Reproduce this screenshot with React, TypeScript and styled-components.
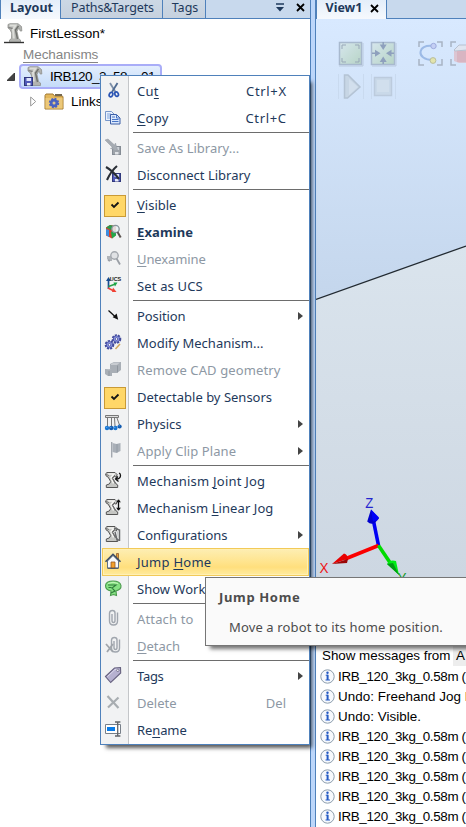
import React from "react";
import styled, { createGlobalStyle, css } from "styled-components";

const Global = createGlobalStyle`
  * { box-sizing: border-box; }
  html, body { margin: 0; padding: 0; overflow: hidden; }
  body { background: #fff; }
  svg { display: block; flex: none; }
`;

const uiFont = `"Noto Sans", "Open Sans", sans-serif`;
const plainFont = `"Liberation Sans", Arial, sans-serif`;

const Window = styled.div`
  position: relative;
  display: flex;
  width: 466px;
  height: 827px;
  overflow: hidden;
  background: #fff;
  font-family: ${uiFont};
`;

const SidePanel = styled.aside`
  width: 310px;
  flex: none;
  display: flex;
  flex-direction: column;
`;

const Splitter = styled.div`
  width: 6px;
  flex: none;
  background: #bcd6fa;
  border-left: 1px solid #4f81bb;
  border-right: 1px solid #4f81bb;
`;

const MainPanel = styled.main`
  flex: 1;
  min-width: 0;
  display: flex;
  flex-direction: column;
`;

const TabBar = styled.div`
  height: 19px;
  flex: none;
  display: flex;
  background: #c8d9ed;
  border-bottom: 1px solid #4f81bb;
`;

const Tab = styled.div<{ $w: number; $active?: boolean; $spacing?: number }>`
  width: ${(p) => p.$w}px;
  height: ${(p) => (p.$active ? 19 : 18)}px;
  flex: none;
  display: flex;
  align-items: center;
  justify-content: center;
  gap: 8px;
  padding: 0 0 3px 2px;
  border-right: 1px solid #4f81bb;
  background: ${(p) => (p.$active ? "linear-gradient(#e4eefa, #f6f9fd)" : "linear-gradient(#ccd8e5, #c6d1de)")};
  color: #1e395b;
  font-size: 12.5px;
  line-height: 16px;
  white-space: nowrap;
  letter-spacing: ${(p) => p.$spacing ?? 0}px;
  font-weight: ${(p) => (p.$active ? 700 : 400)};
`;

const TabLead = styled.div`
  width: 1px;
  height: 18px;
  flex: none;
  background: #4f81bb;
`;

const TabTools = styled.div`
  margin-left: auto;
  display: flex;
  align-items: center;
  gap: 12px;
  padding: 0 5px 3px 0;
`;

const Tree = styled.div`
  display: flex;
  flex-direction: column;
  padding-top: 2px;
  font-family: ${plainFont};
  font-size: 13.5px;
  color: #000;
`;

const TreeRow = styled.div<{ $h: number; $indent: number; $gap?: number }>`
  height: ${(p) => p.$h}px;
  padding-left: ${(p) => p.$indent}px;
  display: flex;
  align-items: center;
  gap: ${(p) => p.$gap ?? 0}px;
  white-space: nowrap;
`;

const GroupLabel = styled.span`
  color: #858585;
  line-height: 15px;
  height: 16px;
  letter-spacing: -0.05px;
  border-bottom: 1px solid #858585;
`;

const SelectedNode = styled.div`
  width: 143px;
  height: 25px;
  display: flex;
  align-items: center;
  gap: 6px;
  padding-left: 3px;
  letter-spacing: -0.5px;
  border: 2px solid #a9adf8;
  border-radius: 4px;
  background: linear-gradient(#e3eefd, #c5dcf9);
`;

const Viewport = styled.div`
  height: 626px;
  flex: none;
`;

const Output = styled.section`
  flex: 1;
  display: flex;
  flex-direction: column;
  font-family: ${plainFont};
  font-size: 13.4px;
  color: #000;
  white-space: nowrap;
  overflow: hidden;
`;

const Filter = styled.div`
  height: 21px;
  flex: none;
  display: flex;
  align-items: center;
  padding-left: 6px;
`;

const FilterLabel = styled.span`
  width: 131px;
  flex: none;
  letter-spacing: -0.02px;
`;

const FilterValue = styled.span`
  flex: 1;
  height: 21px;
  padding: 3px 0 0 3px;
  background: #ededed;
`;

const Message = styled.div`
  height: 20px;
  flex: none;
  display: flex;
  align-items: center;
  gap: 3px;
  padding-left: 4px;
`;

const MessageText = styled.span<{ $spacing: number }>`
  letter-spacing: ${(p) => p.$spacing}px;
`;

const Menu = styled.div`
  position: absolute;
  left: 100px;
  top: 75px;
  width: 210px;
  height: 670px;
  padding: 2px 0 0 0;
  border: 1px solid #4f81bb;
  background: linear-gradient(90deg, #f1f2f3 27px, #c4c6c9 27px, #c4c6c9 28px, #fff 28px);
  box-shadow: 4px 5px 4px -2px rgba(0, 0, 0, 0.65);
`;

const Item = styled.div<{ $hot?: boolean; $off?: boolean }>`
  position: relative;
  height: 27px;
  display: flex;
  align-items: center;
  font-size: 13px;
  line-height: 20px;
  white-space: nowrap;
  color: ${(p) => (p.$off ? "#8d98a4" : "#1e395b")};
  ${(p) =>
    p.$hot &&
    css`
      &::before {
        content: "";
        position: absolute;
        inset: -1px 0 0 1px;
        border: 1px solid #f2ca58;
        box-shadow: inset 0 0 0 1px #fff0b5;
        background: linear-gradient(#fdeeb3, #ffe48d 50%, #ffdf7d 70%, #ffeb9f);
      }
    `}
`;

const Glyph = styled.div`
  position: relative;
  width: 36px;
  flex: none;
`;

const Label = styled.span<{ $bold?: boolean; $spacing: number }>`
  position: relative;
  padding-bottom: 2px;
  font-weight: ${(p) => (p.$bold ? 700 : 400)};
  letter-spacing: ${(p) => p.$spacing}px;
  u { text-underline-offset: 2px; text-decoration-thickness: 1px; text-decoration-skip-ink: none; }
`;

const Shortcut = styled.span<{ $spacing: number }>`
  margin-left: auto;
  padding: 0 ${(p) => 23 - p.$spacing}px 2px 0;
  letter-spacing: ${(p) => p.$spacing}px;
`;

const SubArrow = styled.span`
  margin: 0 6px 1px auto;
  border: 4px solid transparent;
  border-left: 5px solid #444;
  border-right: 0;
`;

const Rule = styled.div`
  height: 3px;
  margin-left: 32px;
  border-top: 1px solid #6d6d6d;
`;

const Tooltip = styled.div`
  position: absolute;
  left: 205px;
  top: 577px;
  width: 280px;
  height: 69px;
  padding: 9px 0 0 13px;
  border: 1px solid #767676;
  background: #fafafa;
  color: #4c4c4c;
  font-size: 13px;
  line-height: 20px;
  white-space: nowrap;
  box-shadow: 4px 4px 4px -1px rgba(0, 0, 0, 0.55);
`;

const TipTitle = styled.div`
  font-weight: 700;
  letter-spacing: 0.65px;
`;

const TipBody = styled.div`
  padding: 10px 0 0 10px;
  letter-spacing: 0.13px;
`;

/* Robot arm silhouette shared by several icons, drawn on a 18x18 grid. */
const ArmShape = () => (
  <>
    <path d="M4 1.5h8l2.200 2.200-1 2.400-2-.6-1.600 1.700 3.400 5.600 1.700 1.200v2.500H3.300v-2.500l3-1 1.400-2.400-2.500-4.400L3 4.800 2.600 2.800z" fill="#c5c6c3" stroke="#555" strokeWidth="1" />
    <path d="M5 3h6l-3 3.500 2.500 6" fill="none" stroke="#f5f5f2" strokeWidth="1.500" />
    <path d="M12 4l-3 3 3.500 6M3 3.500l3 1" fill="none" stroke="#777" />
  </>
);

const Floppy = ({ x, y, gray }: { x: number; y: number; gray?: boolean }) => (
  <g transform={`translate(${x} ${y})`}>
    <rect x=".5" y=".5" width="8" height="8" fill={gray ? "#9da3aa" : "#5059b8"} stroke={gray ? "#858c95" : "#30387c"} />
    <rect x="2.500" y="1" width="4.500" height="3" fill={gray ? "#cbd0d6" : "#dfe5fb"} />
    <rect x="3" y="6" width="3.500" height="2.500" fill={gray ? "#dfe2e6" : "#e9ecf7"} />
  </g>
);

const RobotIcon = ({ base, save }: { base?: boolean; save?: boolean }) => (
  <svg width="20" height="21" viewBox="0 0 20 21">
    <path d="M4 1.500L6 .7h8l3.500 2.800.3 4.500h-1.600l-.8-2.500-1.400.5-1 2.500 1.500 7 2 1.500v2.500H5.500V17L7.500 15.500 7.700 10 6 6.500 4 5z" fill="#b2b3b0" stroke="#8f908d" strokeWidth=".8" />
    <path d="M5.500 2.500h6l-2.500 4 .8 9" fill="none" stroke="#dcddd9" strokeWidth="2" />
    <path d="M14.500 3l-3 4 2 9" fill="none" stroke="#6f716d" strokeWidth="1.400" />
    <path d="M4.500 4.500l4 1" stroke="#777" />
    {base && <path d="M0 19.500h20" stroke="#333" strokeWidth="1.400" />}
    {save && <Floppy x={0} y={11} />}
  </svg>
);

const Box = ({ children }: { children: React.ReactNode }) => (
  <svg width="27" height="27" viewBox="0 0 27 27">{children}</svg>
);

const Gear = ({ cx, cy, r }: { cx: number; cy: number; r: number }) => (
  <g>
    <circle cx={cx} cy={cy} r={r + 0.3} fill="none" stroke="#414a9c" strokeWidth="2.600" strokeDasharray="1.900 1" />
    <circle cx={cx} cy={cy} r={r} fill="#8e98e3" stroke="#414a9c" strokeWidth=".8" />
    <circle cx={cx} cy={cy} r="1.300" fill="#fff" stroke="#414a9c" strokeWidth=".8" />
  </g>
);

const Clip = ({ x }: { x: number }) => (
  <path transform={`translate(${x} 0)`} d="M3.500 8v6.500q0 2 1.500 2t1.500-2V7q0-2.500-2.600-2.500T1 7v8q0 4 4 4t4-4V6.500" fill="none" stroke="#a0a6ae" strokeWidth="1.400" />
);

const icons: Record<string, React.ReactNode> = {
  cut: (
    <>
      <path d="M9 5l5.500 9" stroke="#7d8fa8" strokeWidth="1.800" />
      <path d="M16.500 5L11 14" stroke="#506b92" strokeWidth="1.800" />
      <ellipse cx="10" cy="16.600" rx="1.700" ry="2.300" fill="none" stroke="#2b55b4" strokeWidth="1.700" transform="rotate(25 10 16.600)" />
      <ellipse cx="15.600" cy="16.200" rx="1.700" ry="2.300" fill="none" stroke="#2b55b4" strokeWidth="1.700" transform="rotate(-25 15.600 16.200)" />
    </>
  ),
  copy: (
    <>
      <path d="M4.500 6.500h6l3 3v6h-9z" fill="#eaf1fc" stroke="#7797ca" />
      <path d="M6 9h4M6 11h4M6 13h4" stroke="#7fa5df" />
      <path d="M9.500 9.500h6l3.500 3.500v6H9.500z" fill="#dce9fd" stroke="#3d5fa6" />
      <path d="M15.500 9.500V13H19M11 12h3M11 14.500h6.500M11 16.500h6.500" stroke="#4875c5" fill="none" />
    </>
  ),
  save: (
    <>
      <Floppy x={11} y={11} gray />
      <path d="M4 5l3-1 6.500 6 1-2 2 7-7-1.500 2-1z" fill="#a5abb2" stroke="#949aa2" strokeWidth=".5" />
    </>
  ),
  disconnect: (
    <>
      <Floppy x={11} y={11} />
      <path d="M5 5q7 4 13 12M16 4Q10 9 6 18" fill="none" stroke="#292e35" strokeWidth="2.100" />
    </>
  ),
  check: (
    <>
      <rect x="3.500" y="3.500" width="21" height="21" fill="#ffd768" stroke="#c99a36" />
      <path d="M10.500 12.500l2.500 2.500L17.500 10.500" fill="none" stroke="#151515" strokeWidth="1.800" />
    </>
  ),
  examine: (
    <>
      <path d="M5 8.500l4-2.500 6 1v9l-4 3.500-6-3z" fill="#d5442f" />
      <path d="M5 8.500l4-2.500 4 1-3 4z" fill="#2a9a4b" />
      <path d="M5 10v6l3 2v-7z" fill="#3c8de0" />
      <path d="M10 13l5-2v5.500l-4 3z" fill="#24a84b" />
      <circle cx="14.500" cy="10" r="3.700" fill="#e9f2f5" fillOpacity=".85" stroke="#87949c" strokeWidth="1.300" />
      <path d="M16.500 13l3.200 5.500" stroke="#5b5350" strokeWidth="2" />
    </>
  ),
  unexamine: (
    <>
      <path d="M6 10h5v5H8l-2-2z" fill="#b0b4b9" />
      <circle cx="13.500" cy="9.500" r="3.700" fill="#e0e2e5" stroke="#a3a8ae" strokeWidth="1.400" />
      <path d="M15.500 12.500l3.500 6M7 14l2 1" stroke="#9a9fa6" strokeWidth="1.800" />
    </>
  ),
  ucs: (
    <>
      <path d="M7.500 16V6" stroke="#174b91" strokeWidth="1.700" />
      <path d="M5 8l2.500-4L10 8z" fill="#164b93" />
      <path d="M7.500 13.500l7-2.500" stroke="#2ba248" strokeWidth="1.600" />
      <path d="M12.500 9.500h4l-2.500 4z" fill="#18a644" />
      <path d="M7 15l5 2.500" stroke="#ef4238" strokeWidth="1.700" />
      <path d="M11 19l1-4.500 3.500 4.500z" fill="#f04134" />
      <text x="8.800" y="8" fontSize="5.500" fontWeight="700" fontFamily="Liberation Sans" fill="#222" textLength="11.400">UCS</text>
    </>
  ),
  position: (
    <>
      <path d="M7.500 7.500l7 6.500" stroke="#111" strokeWidth="1.300" />
      <path d="M17.200 16.700l-5.500-2.400 3.900-3.900z" fill="#111" />
    </>
  ),
  gears: (
    <>
      <Gear cx={15.500} cy={9} r={3.200} />
      <Gear cx={8.500} cy={14.800} r={3.200} />
      <path d="M14.500 19l4.500-5" stroke="#d2a85a" strokeWidth="1.500" />
    </>
  ),
  geometry: (
    <>
      <path d="M4 12h7v7H7l-3-2zM9 7l4-2h7v8l-4 3H9z" fill="#a9afb6" />
      <path d="M10 7l3-1.500h6L16 8h-6zM4.500 12l3 1H11" fill="#c8ccd1" />
      <path d="M16.500 8.500v7M8 14v5" stroke="#8f969e" />
    </>
  ),
  physics: (
    <>
      <path d="M4.500 4.500h13v2h-13z" fill="#dedede" stroke="#777" />
      <path d="M6.500 7v8M10.500 7v8M13.500 7l.5 8M16 7l2.500 7" stroke="#777" fill="none" />
      <circle cx="6" cy="17" r="2.200" fill="#1774d0" />
      <circle cx="10.200" cy="17" r="2.200" fill="#125bb0" />
      <circle cx="14.400" cy="17" r="2.200" fill="#1774d0" />
      <circle cx="18.600" cy="15.500" r="2.100" fill="#125bb0" />
      <path d="M5.300 16.300h1m3 0h1m3 0h1m3.300-1.500h1" stroke="#75bdff" />
    </>
  ),
  clipPlane: (
    <>
      <path d="M10.700 4v15.500" stroke="#a3a8af" strokeWidth="1.400" />
      <path d="M11.500 5l4 1 4-1v8l-4 2-4-1z" fill="#a9afb7" />
      <path d="M16 6v8.500" stroke="#929ba4" />
    </>
  ),
  joint: (
    <>
      <g transform="translate(2 3)"><ArmShape /></g>
      <path d="M15 11q4.500 0 4.500-3.500 0-2-1.500-2.500M17 8.500L14.500 11l3 2.500" fill="none" stroke="#111" strokeWidth="1.300" />
    </>
  ),
  linear: (
    <>
      <g transform="translate(2 3)"><ArmShape /></g>
      <path d="M17.500 4v12M15 7.200l2.500-3.500 2.500 3.500M15 12.800l2.500 3.500 2.500-3.500" fill="#111" stroke="#f1f2f3" strokeWidth=".4" />
      <path d="M17.500 5v10" stroke="#111" strokeWidth="1.300" />
    </>
  ),
  config: (
    <>
      <g transform="translate(2 3)"><ArmShape /></g>
      <path d="M13 6l5.500 2v11M14 10l2 8h3" fill="none" stroke="#696b6d" strokeWidth="1.500" />
      <path d="M13.500 9l3 1 .8 6" fill="none" stroke="#c9cbca" strokeWidth="1.200" />
    </>
  ),
  home: (
    <>
      <path d="M15.500 4.500h2v6h-2z" fill="#e99f35" stroke="#7f4e26" strokeWidth=".7" />
      <path d="M6.500 12L12 6.500l5.500 5.500v7h-11z" fill="#f8fafc" stroke="#61738a" />
      <path d="M4.500 12.800L12 5.300l7.500 7.500" fill="none" stroke="#3b4d68" strokeWidth="1.600" />
      <path d="M10 13h4v6h-4z" fill="#f3a12c" stroke="#975923" strokeWidth=".8" />
      <path d="M6.500 19.300h11" stroke="#404f64" />
    </>
  ),
  workspace: (
    <>
      <path d="M4.500 9.500Q5 5 12 5t8 4.500q.4 4-5 5.500l.5 4.500-3-1-3 1 .5-4.500q-5.500-1-5.500-5.500z" fill="#86e183" stroke="#4b9a4d" strokeWidth="1.100" />
      <path d="M7 9h8l-4 3 3 3-4 2M7.500 11.500h3" fill="none" stroke="#2f7c3b" strokeWidth="1.100" />
      <path d="M7 7.500q5-2.500 10 0" stroke="#c6f8bb" fill="none" />
    </>
  ),
  attach: <Clip x={7.500} />,
  detach: (
    <>
      <Clip x={9.500} />
      <path d="M5 11l7 8M12 11l-6 8" stroke="#a0a5ab" strokeWidth="1.800" />
    </>
  ),
  tag: (
    <>
      <path d="M4.500 13.500l9-8.500 6-.5.2 5.500-10 9.500z" fill="#b6b1d0" stroke="#66617f" strokeWidth="1.100" />
      <path d="M6.500 13.500l7.500-7 3.500-.2" stroke="#dedbef" fill="none" />
      <circle cx="16.800" cy="7.300" r="1.200" fill="#fff" stroke="#66617f" strokeWidth=".8" />
    </>
  ),
  delete: <path d="M6.500 6l11 12M17.500 7.500l-10.500 10" stroke="#a8adb1" strokeWidth="2.200" fill="none" />,
  rename: (
    <>
      <path d="M4.500 7.500h15v9h-15z" fill="#fff" stroke="#777f89" />
      <path d="M6 10h8v4H6z" fill="#087be8" />
      <path d="M14 5h2l.7.6.7-.6h2M16.700 5.500v13M14 19h2l.7-.6.7.6h2" fill="none" stroke="#60646a" strokeWidth="1.300" />
    </>
  ),
};

type Entry = {
  icon: string;
  text: [string, string, string];
  off?: boolean;
  bold?: boolean;
  hot?: boolean;
  sub?: boolean;
  keys?: string;
  spacing?: number;
} | null;

const entries: Entry[] = [
  { icon: "cut", text: ["Cu", "t", ""], keys: "Ctrl+X", spacing: 0.3 },
  { icon: "copy", text: ["", "C", "opy"], keys: "Ctrl+C", spacing: 0.3 },
  null,
  { icon: "save", text: ["Save As Library...", "", ""], off: true },
  { icon: "disconnect", text: ["Disconnect Library", "", ""] },
  null,
  { icon: "check", text: ["", "V", "isible"] },
  { icon: "examine", text: ["", "E", "xamine"], bold: true, spacing: 0.1 },
  { icon: "unexamine", text: ["", "U", "nexamine"], off: true, spacing: -0.1 },
  { icon: "ucs", text: ["Set as UCS", "", ""], spacing: 0.15 },
  null,
  { icon: "position", text: ["Position", "", ""], sub: true, spacing: -0.1 },
  { icon: "gears", text: ["Modify Mechanism...", "", ""] },
  { icon: "geometry", text: ["Remove CAD geometry", "", ""], off: true, spacing: 0.12 },
  { icon: "check", text: ["Detectable by Sensors", "", ""] },
  { icon: "physics", text: ["Physics", "", ""], sub: true },
  { icon: "clipPlane", text: ["Apply Clip Plane", "", ""], off: true, sub: true, spacing: 0.08 },
  null,
  { icon: "joint", text: ["Mechanism ", "J", "oint Jog"], spacing: 0.22 },
  { icon: "linear", text: ["Mechanism ", "L", "inear Jog"], spacing: 0.08 },
  { icon: "config", text: ["Configurations", "", ""], sub: true },
  { icon: "home", text: ["Jump ", "H", "ome"], hot: true, spacing: 0.25 },
  { icon: "workspace", text: ["Show Work", "", ""] },
  null,
  { icon: "attach", text: ["Attach to", "", ""], off: true, spacing: 0.15 },
  { icon: "detach", text: ["", "D", "etach"], off: true },
  null,
  { icon: "tag", text: ["Tags", "", ""], sub: true, spacing: -0.3 },
  { icon: "delete", text: ["Delete", "", ""], off: true, keys: "Del" },
  { icon: "rename", text: ["Re", "n", "ame"], spacing: -0.1 },
];

const Cross = () => (
  <svg width="9" height="9" viewBox="0 0 9 9">
    <path d="M1 1l7 7M8 1L1 8" stroke="#000" strokeWidth="1.800" />
  </svg>
);

const Scene = () => (
  <svg width="150" height="626" viewBox="316 19 150 626">
    <defs>
      <linearGradient id="sky" x1="0" y1="19" x2="0" y2="300" gradientUnits="userSpaceOnUse">
        <stop offset="0" stopColor="#d8e9ff" />
        <stop offset="1" stopColor="#c4d6ec" />
      </linearGradient>
      <linearGradient id="ground" x1="0" y1="246" x2="0" y2="577" gradientUnits="userSpaceOnUse">
        <stop offset="0" stopColor="#dae4ed" />
        <stop offset="1" stopColor="#cdd7e2" />
      </linearGradient>
      <linearGradient id="pane" x1="0" y1="0" x2="1" y2="1">
        <stop offset="0" stopColor="#d6e6ed" />
        <stop offset="1" stopColor="#b7d4c6" />
      </linearGradient>
    </defs>
    <path d="M316 19h150v281H316z" fill="url(#sky)" />
    <path d="M316 299.500L466 246v399H316z" fill="url(#ground)" />
    <path d="M316 299.500L466 246" stroke="#222a31" strokeWidth="1.300" />

    <rect x="339.500" y="42.500" width="22" height="22" fill="url(#pane)" stroke="#a8b9ce" strokeWidth="1.500" />
    <path d="M342 49v-4h4M355 45h4v4M359 58v4h-4M346 62h-4v-4" fill="none" stroke="#98a7b8" />
    <path d="M339 66h24V43" fill="none" stroke="#b9c9dd" />
    <rect x="371.500" y="42.500" width="23" height="22" fill="url(#pane)" stroke="#a8b9ce" strokeWidth="1.500" />
    <path d="M379.700 44.500h7l-3.500 5.500zM379.700 62h7l-3.500-5.500zM375 49.700v7l5.500-3.500zM391.500 49.700v7l-5.500-3.500z" fill="#8ea0bd" />
    <path d="M383.200 42v5M383.200 60v4M372 53.200h5M390 53.200h4" stroke="#8ea0bd" strokeWidth="1.500" />
    <path d="M372 66h24V43" fill="none" stroke="#b9c9dd" />

    <path d="M419 47v-5h5M437 42h5v5M442 59v6h-5M424 65h-5v-6" fill="none" stroke="#a8b4c4" strokeWidth="1.500" />
    <path d="M433 46c-8-1-12 2-12.500 6s4 8 12 8" fill="none" stroke="#9cbae6" strokeWidth="2" />
    <circle cx="433.500" cy="46" r="2.700" fill="#c4cff4" stroke="#9eabdd" />
    <circle cx="433" cy="60.500" r="2.900" fill="#e2e4ac" stroke="#b8bd9d" />
    <path d="M451 47v-5h5M451 59v6h5" fill="none" stroke="#a8b4c4" strokeWidth="1.500" />
    <path d="M454 50l5-5h8v18h-8l-5-2z" fill="#dcc5d2" />
    <path d="M454 50l5-5h8v5l-12 1z" fill="#dfe5f0" stroke="#b7c1d0" />
    <path d="M457 51h10v11h-10z" fill="#d8b5c2" />

    <path d="M338.500 74v25M363.500 74v25M371.500 74v25M395.500 74v25" stroke="#c9daef" />
    <path d="M344.500 75v23h3l12.500-11L348 75z" fill="#c7d6e5" stroke="#b4c3d4" strokeWidth="1.500" />
    <path d="M349 79v16l9-8z" fill="#d2dfed" />
    <rect x="374.500" y="77.500" width="17" height="18" fill="#c9d9e9" stroke="#bccbdd" strokeWidth="1.500" />
    <rect x="377" y="80" width="12" height="12" fill="#d1dfed" />

    <path d="M378.500 545.500L373.500 521" stroke="#0000f4" strokeWidth="3.600" />
    <path d="M371 509.500l-3.800 12q4 4 8 1l3.800-4z" fill="#0000cd" />
    <path d="M371 509.500l2 12 4-1 2-3z" fill="#0000f8" />
    <path d="M378.500 545.500L345 559" stroke="#fb0000" strokeWidth="3.600" />
    <path d="M332 564l12-10.500q4 1 3.500 5.500z" fill="#e80000" />
    <path d="M332 564l16-5-1 4z" fill="#9a0606" />
    <path d="M378.500 545.500L391 564" stroke="#00db00" strokeWidth="3.600" />
    <path d="M387 564q3-5 9-3l3 14z" fill="#00ec16" />
    <path d="M387 564l6-1 6 12z" fill="#009b12" />
    <text x="365.300" y="508" fontFamily="Liberation Sans" fontSize="14.500" textLength="8" lengthAdjust="spacingAndGlyphs" fill="#2424cf">Z</text>
    <text x="319.500" y="573" fontFamily="Liberation Sans" fontSize="15" textLength="9" lengthAdjust="spacingAndGlyphs" fill="#ed1515">X</text>
    <text x="397.500" y="583" fontFamily="Liberation Sans" fontSize="14" textLength="9" lengthAdjust="spacingAndGlyphs" fill="#159b28">Y</text>
  </svg>
);

const InfoIcon = () => (
  <svg width="15" height="15" viewBox="0 0 15 15">
    <circle cx="7.500" cy="7.500" r="6.700" fill="#f6f9fd" stroke="#8d9ead" strokeWidth="1" />
    <path d="M5.700 6.200H8M5.500 11h4.500" stroke="#245ac4" strokeWidth="1" />
    <path d="M7.600 5.800V11" stroke="#245ac4" strokeWidth="2" />
    <circle cx="7.500" cy="3.800" r="1.200" fill="#245ac4" />
  </svg>
);

const robotMessage = { text: "IRB_120_3kg_0.58m (", spacing: -0.33 };

const messages = [
  robotMessage,
  { text: "Undo: Freehand Jog M", spacing: 0.05 },
  { text: "Undo: Visible.", spacing: 0.05 },
  robotMessage,
  robotMessage,
  robotMessage,
  robotMessage,
  robotMessage,
];

export default function App() {
  return (
    <>
      <Global />
      <Window>
        <SidePanel>
          <TabBar>
            <TabLead />
            <Tab $w={60} $active>Layout</Tab>
            <Tab $w={102} $spacing={-0.12}>Paths&amp;Targets</Tab>
            <Tab $w={43}>Tags</Tab>
            <TabTools>
              <svg width="8" height="9" viewBox="0 0 8 9">
                <path d="M0 1h8" stroke="#1e395b" strokeWidth="1.500" />
                <path d="M0 4h8L4 8.500z" fill="#1e395b" />
              </svg>
              <Cross />
            </TabTools>
          </TabBar>
          <Tree>
            <TreeRow $h={24} $indent={4} $gap={6}>
              <RobotIcon base />
              FirstLesson*
            </TreeRow>
            <TreeRow $h={19} $indent={23}>
              <GroupLabel>Mechanisms</GroupLabel>
            </TreeRow>
            <TreeRow $h={25} $indent={7} $gap={4}>
              <svg width="8" height="9" viewBox="0 0 8 9"><path d="M7.500 1v7.500H0z" fill="#444" stroke="#222" strokeWidth=".8" /></svg>
              <SelectedNode>
                <RobotIcon save />
                IRB120_3_58__01
              </SelectedNode>
            </TreeRow>
            <TreeRow $h={24} $indent={30} $gap={7}>
              <svg width="7" height="11" viewBox="0 0 7 11"><path d="M.7 1v9l5-4.500z" fill="#fff" stroke="#999" /></svg>
              <svg width="20" height="17" viewBox="0 0 20 17">
                <path d="M1 2.500L2 1h7l1.500 2H18q1 0 1 1v12H1z" fill="#e3b75b" stroke="#a27b34" />
                <path d="M11 1h7v2h-7z" fill="#75684f" />
                <path d="M1.500 5h17v10.500h-17z" fill="#ecc879" />
                <circle cx="10" cy="10" r="4.200" fill="#4c63c1" stroke="#4c63c1" strokeWidth="2" strokeDasharray="1.900 1.400" />
                <circle cx="10" cy="10" r="1.500" fill="#e1c58b" />
              </svg>
              Links
            </TreeRow>
          </Tree>
        </SidePanel>
        <Splitter />
        <MainPanel>
          <TabBar>
            <TabLead />
            <Tab $w={70} $active>View1<Cross /></Tab>
          </TabBar>
          <Viewport><Scene /></Viewport>
          <Output>
            <Filter><FilterLabel>Show messages from</FilterLabel><FilterValue>A</FilterValue></Filter>
            {messages.map((m, i) => (
              <Message key={i}><InfoIcon /><MessageText $spacing={m.spacing}>{m.text}</MessageText></Message>
            ))}
          </Output>
        </MainPanel>
        <Menu>
          {entries.map((e, i) =>
            e === null ? (
              <Rule key={i} />
            ) : (
              <Item key={i} $hot={e.hot} $off={e.off}>
                <Glyph><Box>{icons[e.icon]}</Box></Glyph>
                <Label $bold={e.bold} $spacing={e.spacing ?? 0}>
                  {e.text[0]}
                  {e.text[1] && <u>{e.text[1]}</u>}
                  {e.text[2]}
                </Label>
                {e.keys && <Shortcut $spacing={e.keys === "Del" ? 0 : 0.65}>{e.keys}</Shortcut>}
                {e.sub && <SubArrow />}
              </Item>
            )
          )}
        </Menu>
        <Tooltip>
          <TipTitle>Jump Home</TipTitle>
          <TipBody>Move a robot to its home position.</TipBody>
        </Tooltip>
      </Window>
    </>
  );
}
